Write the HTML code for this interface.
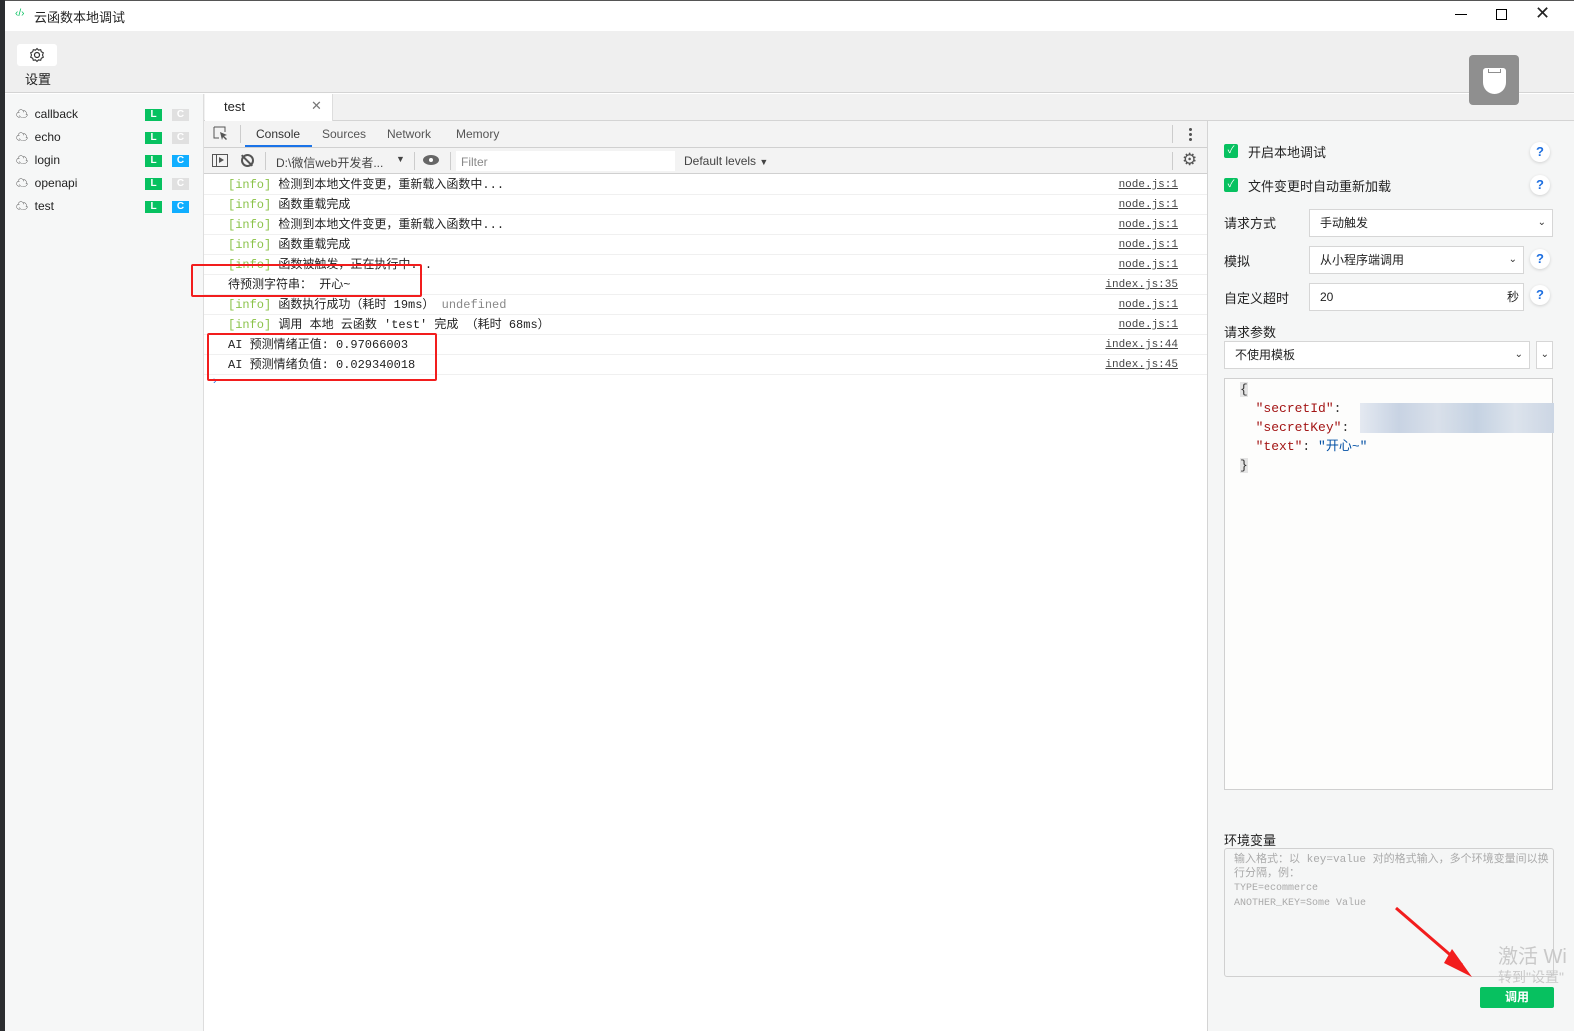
<!DOCTYPE html>
<html><head><meta charset="utf-8"><style>
*{box-sizing:border-box;margin:0;padding:0}
body{width:1574px;height:1031px;overflow:hidden;position:relative;background:#fff;font-family:"Liberation Sans","Noto Sans CJK SC",sans-serif;font-size:12px;color:#222}
.a{position:absolute}
.mono{font-family:"Liberation Mono","Noto Sans CJK SC",monospace;font-size:12px}
.row{position:absolute;left:204px;width:1003px;height:20px;border-bottom:1px solid #f0f0f0;line-height:20px}
.row .t{position:absolute;left:24px}
.row .src{position:absolute;right:29px;text-decoration:underline;color:#444;font-size:11px}
.info{color:#8bc34a}
.badge{position:absolute;width:17px;height:12px;color:#fff;font-size:10px;font-weight:bold;text-align:center;line-height:12px}
.sel{position:absolute;background:#fff;border:1px solid #d6d6d6;height:28px;line-height:26px;padding-left:10px;font-size:12px}
.q{position:absolute;width:20px;height:20px;border-radius:10px;background:#fff;box-shadow:0 1px 3px rgba(0,0,0,.15);color:#1e6fe0;font-weight:bold;font-size:13px;text-align:center;line-height:20px}
.chev{position:absolute;right:6px;top:0;font-size:10px;color:#333}
</style></head><body>
<div class="a" style="left:0;top:0;width:5px;height:1031px;background:#2b2d30"></div>
<div class="a" style="left:5px;top:0;width:1569px;height:1px;background:#555"></div>
<div class="a" style="left:15px;top:8px;color:#07c160;font-size:10px">‹/›</div>
<div class="a" style="left:34px;top:7px;font-size:13px">云函数本地调试</div>
<div class="a" style="left:1455px;top:14px;width:12px;height:1px;background:#000"></div>
<div class="a" style="left:1496px;top:9px;width:11px;height:11px;border:1px solid #000"></div>
<div class="a" style="left:1535px;top:3px;font-size:18px;font-weight:300">✕</div>
<div class="a" style="left:5px;top:31px;width:1569px;height:62px;background:#efefef;border-bottom:1px solid #d4d4d4"></div>
<div class="a" style="left:17px;top:44px;width:40px;height:22px;background:#fff;border-radius:3px"></div>
<svg class="a" style="left:29px;top:47px" width="16" height="16" viewBox="0 0 16 16"><circle cx="8" cy="8" r="2.5" fill="none" stroke="#333" stroke-width="1.2"/><path d="M8 1.5l1.5 1.6 2.2-.4.6 2.1 2 1-.8 2.2.8 2.2-2 1-.6 2.1-2.2-.4L8 14.5l-1.5-1.6-2.2.4-.6-2.1-2-1 .8-2.2-.8-2.2 2-1 .6-2.1 2.2.4z" fill="none" stroke="#333" stroke-width="1.1"/></svg>
<div class="a" style="left:25px;top:69px;font-size:13px">设置</div>
<div class="a" style="left:5px;top:94px;width:199px;height:937px;background:#f6f7f7;border-right:1px solid #ddd"></div>
<div class="a" style="left:16px;top:103px;font-size:12px;line-height:23px">
<div>☁&nbsp; callback</div><div>☁&nbsp; echo</div><div>☁&nbsp; login</div><div>☁&nbsp; openapi</div><div>☁&nbsp; test</div></div>
<div class="badge" style="left:145px;top:109px;background:#07c160">L</div><div class="badge" style="left:172px;top:109px;background:#e0e0e0">C</div>
<div class="badge" style="left:145px;top:132px;background:#07c160">L</div><div class="badge" style="left:172px;top:132px;background:#e0e0e0">C</div>
<div class="badge" style="left:145px;top:155px;background:#07c160">L</div><div class="badge" style="left:172px;top:155px;background:#10aeff">C</div>
<div class="badge" style="left:145px;top:178px;background:#07c160">L</div><div class="badge" style="left:172px;top:178px;background:#e0e0e0">C</div>
<div class="badge" style="left:145px;top:201px;background:#07c160">L</div><div class="badge" style="left:172px;top:201px;background:#10aeff">C</div>
<div class="a" style="left:204px;top:94px;width:1370px;height:27px;background:#f1f1f1;border-bottom:1px solid #d4d4d4"></div>
<div class="a" style="left:205px;top:94px;width:128px;height:28px;background:#fff;border-right:1px solid #ddd"></div>
<div class="a" style="left:224px;top:99px;font-size:13px">test</div>
<div class="a" style="left:311px;top:98px;font-size:13px;color:#777">✕</div>
<div class="a" style="left:1469px;top:55px;width:50px;height:50px;background:#8f8f8f;border-radius:4px"></div>
<div class="a" style="left:1483px;top:68px;width:23px;height:26px;background:#fff;border-radius:3px 3px 12px 12px"></div>
<div class="a" style="left:1488px;top:69px;width:13px;height:4px;border:1px solid #8f8f8f;border-top:none"></div>
<div class="a" style="left:204px;top:121px;width:1003px;height:27px;background:#f3f3f3;border-bottom:1px solid #d0d0d0"></div>
<svg class="a" style="left:213px;top:126px" width="16" height="16"><path d="M1 1h11v5M1 1v11h5" fill="none" stroke="#555"/><path d="M7 6l7 3-3 1 3 3-1 1-3-3-1 3z" fill="#555"/></svg>
<div class="a" style="left:240px;top:125px;width:1px;height:18px;background:#ccc"></div>
<div class="a" style="left:256px;top:127px;color:#333">Console</div>
<div class="a" style="left:245px;top:145px;width:67px;height:2px;background:#1a73e8"></div>
<div class="a" style="left:322px;top:127px;color:#555">Sources</div>
<div class="a" style="left:387px;top:127px;color:#555">Network</div>
<div class="a" style="left:456px;top:127px;color:#555">Memory</div>
<div class="a" style="left:1172px;top:125px;width:1px;height:18px;background:#ccc"></div>
<div class="a" style="left:1189px;top:127px;width:3px;height:14px;background:radial-gradient(circle,#555 1.4px,transparent 1.6px) 0 0/3px 5px"></div>
<div class="a" style="left:204px;top:148px;width:1003px;height:26px;background:#f3f3f3;border-bottom:1px solid #d0d0d0"></div>
<div class="a" style="left:212px;top:154px;width:16px;height:13px;border:1px solid #555"></div>
<div class="a" style="left:216px;top:154px;width:1px;height:13px;background:#555"></div>
<div class="a" style="left:219px;top:157px;width:0;height:0;border-left:5px solid #555;border-top:3.5px solid transparent;border-bottom:3.5px solid transparent"></div>
<div class="a" style="left:241px;top:154px;width:13px;height:13px;border:2px solid #555;border-radius:50%"></div>
<div class="a" style="left:246px;top:153px;width:2px;height:15px;background:#555;transform:rotate(-45deg)"></div>
<div class="a" style="left:265px;top:152px;width:1px;height:18px;background:#ccc"></div>
<div class="a" style="left:276px;top:154px;color:#444">D:\微信web开发者...</div>
<div class="a" style="left:396px;top:154px;font-size:9px;color:#444">▼</div>
<div class="a" style="left:414px;top:152px;width:1px;height:18px;background:#ccc"></div>
<div class="a" style="left:423px;top:155px;width:16px;height:10px;border-radius:50%;background:#666"></div>
<div class="a" style="left:428px;top:157px;width:6px;height:6px;border-radius:50%;background:#fff;border:1.5px solid #666"></div>
<div class="a" style="left:450px;top:152px;width:1px;height:18px;background:#ccc"></div>
<div class="a" style="left:456px;top:151px;width:219px;height:20px;background:#fff"></div>
<div class="a" style="left:461px;top:155px;color:#888">Filter</div>
<div class="a" style="left:684px;top:154px;color:#444">Default levels <span style="font-size:9px">▼</span></div>
<div class="a" style="left:1172px;top:152px;width:1px;height:18px;background:#ccc"></div>
<div class="a" style="left:1182px;top:150px;font-size:17px;color:#555">⚙</div>
<div class="row mono" style="top:175px"><span class="t"><span class="info">[info]</span> 检测到本地文件变更，重新载入函数中...</span><span class="src">node.js:1</span></div>
<div class="row mono" style="top:195px"><span class="t"><span class="info">[info]</span> 函数重载完成</span><span class="src">node.js:1</span></div>
<div class="row mono" style="top:215px"><span class="t"><span class="info">[info]</span> 检测到本地文件变更，重新载入函数中...</span><span class="src">node.js:1</span></div>
<div class="row mono" style="top:235px"><span class="t"><span class="info">[info]</span> 函数重载完成</span><span class="src">node.js:1</span></div>
<div class="row mono" style="top:255px"><span class="t"><span class="info">[info]</span> 函数被触发，正在执行中...</span><span class="src">node.js:1</span></div>
<div class="row mono" style="top:275px"><span class="t">待预测字符串： 开心~</span><span class="src">index.js:35</span></div>
<div class="row mono" style="top:295px"><span class="t"><span class="info">[info]</span> 函数执行成功（耗时 19ms） <span style="color:#888">undefined</span></span><span class="src">node.js:1</span></div>
<div class="row mono" style="top:315px"><span class="t"><span class="info">[info]</span> 调用 本地 云函数 'test' 完成 （耗时 68ms）</span><span class="src">node.js:1</span></div>
<div class="row mono" style="top:335px"><span class="t">AI 预测情绪正值: 0.97066003</span><span class="src">index.js:44</span></div>
<div class="row mono" style="top:355px"><span class="t">AI 预测情绪负值: 0.029340018</span><span class="src">index.js:45</span></div>
<div class="a" style="left:213px;top:375px;color:#1a73e8;font-size:11px">›</div>
<div class="a" style="left:191px;top:264px;width:231px;height:33px;border:2px solid #f21d1d;border-radius:2px"></div>
<div class="a" style="left:207px;top:333px;width:230px;height:48px;border:2px solid #f21d1d;border-radius:2px"></div>
<div class="a" style="left:1207px;top:121px;width:367px;height:910px;background:#f5f6f6;border-left:1px solid #d4d4d4"></div>
<div class="a" style="left:1224px;top:144px;width:14px;height:14px;background:#07c160;border-radius:2px;color:#fff;font-size:10px;text-align:center;line-height:14px">✓</div>
<div class="a" style="left:1248px;top:142px;font-size:13px">开启本地调试</div>
<div class="q" style="left:1530px;top:142px">?</div>
<div class="a" style="left:1224px;top:178px;width:14px;height:14px;background:#07c160;border-radius:2px;color:#fff;font-size:10px;text-align:center;line-height:14px">✓</div>
<div class="a" style="left:1248px;top:176px;font-size:13px">文件变更时自动重新加载</div>
<div class="q" style="left:1530px;top:175px">?</div>
<div class="a" style="left:1224px;top:213px;font-size:13px">请求方式</div>
<div class="sel" style="left:1309px;top:209px;width:244px">手动触发<span class="chev">⌄</span></div>
<div class="a" style="left:1224px;top:251px;font-size:13px">模拟</div>
<div class="sel" style="left:1309px;top:246px;width:215px">从小程序端调用<span class="chev">⌄</span></div>
<div class="q" style="left:1530px;top:249px">?</div>
<div class="a" style="left:1224px;top:288px;font-size:13px">自定义超时</div>
<div class="sel" style="left:1309px;top:283px;width:215px">20<span style="position:absolute;right:4px">秒</span></div>
<div class="q" style="left:1530px;top:285px">?</div>
<div class="a" style="left:1224px;top:322px;font-size:13px">请求参数</div>
<div class="sel" style="left:1224px;top:341px;width:306px">不使用模板<span class="chev">⌄</span></div>
<div class="sel" style="left:1536px;top:341px;width:17px;padding:0"><span class="chev" style="right:3px">⌄</span></div>
<div class="a" style="left:1224px;top:378px;width:329px;height:412px;background:#fdfdfc;border:1px solid #d0d0d0"></div>
<div class="a mono" style="left:1240px;top:380px;font-size:13px;line-height:19px;white-space:pre;color:#333"><span style="background:#e4e4e4">{</span>
  <span style="color:#a31515">"secretId"</span>:
  <span style="color:#a31515">"secretKey"</span>:
  <span style="color:#a31515">"text"</span>: <span style="color:#0451a5">"开心~"</span>
<span style="background:#e4e4e4">}</span></div>
<div class="a" style="left:1360px;top:403px;width:194px;height:30px;background:linear-gradient(90deg,#e4e9f1,#c8d3e3 20%,#d9e0ea 40%,#c5d2e2 60%,#dce3ec 80%,#ccd6e4)"></div>
<div class="a" style="left:1224px;top:830px;font-size:13px">环境变量</div>
<div class="a" style="left:1224px;top:848px;width:330px;height:129px;border:1px solid #d0d0d0;border-radius:3px;background:#f5f6f6"></div>
<div class="a" style="left:1234px;top:853px;color:#aaa;font-family:'Liberation Mono','Noto Sans CJK SC',monospace;font-size:11px;line-height:14px;width:316px">输入格式：以 key=value 对的格式输入，多个环境变量间以换行分隔，例：<br><span style="font-size:10px">TYPE=ecommerce<br>ANOTHER_KEY=Some Value</span></div>
<div class="a" style="left:1498px;top:940px;font-size:20px;color:#c9c9c9">激活 Wi</div>
<div class="a" style="left:1498px;top:967px;font-size:14px;color:#c9c9c9">转到"设置"</div>
<svg class="a" style="left:1390px;top:905px" width="90" height="75"><path d="M6 3L72 60" stroke="#f21d1d" stroke-width="3"/><path d="M62 44l20 28-28-14z" fill="#f21d1d"/></svg>
<div class="a" style="left:1480px;top:987px;width:74px;height:21px;background:#07c160;border-radius:2px;color:#fff;text-align:center;line-height:21px;font-size:12px;font-weight:bold">调用</div>
</body></html>
